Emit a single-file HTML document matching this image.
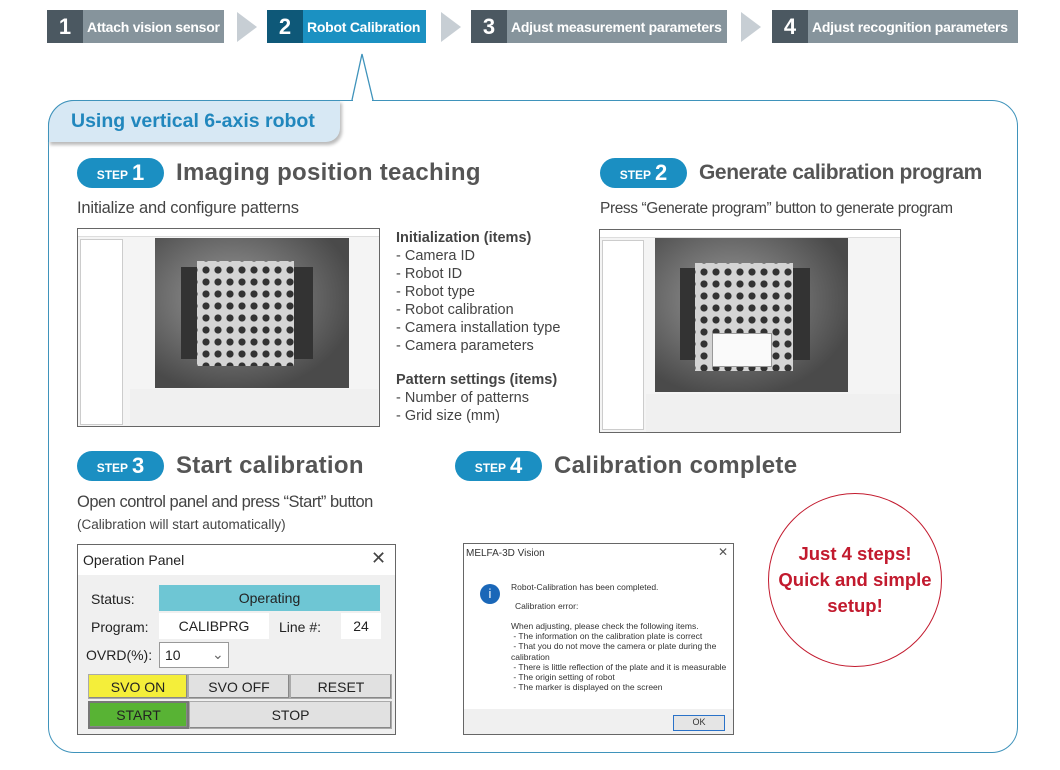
<!DOCTYPE html>
<html><head><meta charset="utf-8"><style>
*{margin:0;padding:0;box-sizing:border-box}
body{width:1060px;height:770px;background:#fff;font-family:"Liberation Sans",Arial,sans-serif;position:relative;overflow:hidden;color:#444}
.a{position:absolute}
.sb{position:absolute;top:10px;height:33px;display:flex;color:#fff;font-weight:bold}
.sb .n{width:36px;display:flex;align-items:center;justify-content:center;font-size:22px}
.sb .t{display:flex;align-items:center;padding-left:4px;font-size:14px;letter-spacing:-0.25px;white-space:nowrap}
.arr{position:absolute;top:12px;width:0;height:0;border-top:15px solid transparent;border-bottom:15px solid transparent;border-left:20px solid #c7ced4}
.pill{position:absolute;height:30px;width:87px;border-radius:15px;background:#1b8fc2;color:#fff;font-weight:bold;display:flex;align-items:center;justify-content:center}
.pill small{font-size:12px;margin-right:4px;margin-top:3px}
.pill b{font-size:22px}
.h{position:absolute;font-size:24px;font-weight:bold;color:#555;letter-spacing:0.3px;white-space:nowrap}
.sub{position:absolute;font-size:16.5px;color:#444;letter-spacing:-0.2px;white-space:nowrap}
.list{position:absolute;font-size:14.5px;line-height:18px;color:#444}
.shot{position:absolute;border:1px solid #666;background:#f4f4f4}
.plate{position:absolute;background-color:#d4d4d4;background-image:radial-gradient(circle,#333 0 40%,transparent 44%);background-size:12px 12px;background-position:3px 3px}
.btn{position:absolute;background:#e1e1e1;border:1px solid #aaa;box-shadow:inset -1px -1px 0 #888;font-size:14px;display:flex;align-items:center;justify-content:center;color:#222}
.op{font-family:"Liberation Sans",sans-serif;color:#222}
.img{position:absolute;background:#5a5a5a;background-image:radial-gradient(ellipse at 40% 40%,#9a9a9a,#4a4a4a 75%)}
</style></head><body>

<div class="sb" style="left:47px;width:177px"><div class="n" style="background:#4b5861">1</div><div class="t" style="background:#86949c;flex:1">Attach vision sensor</div></div>
<div class="arr" style="left:237px"></div>
<div class="sb" style="left:267px;width:159px"><div class="n" style="background:#0e5878">2</div><div class="t" style="background:#1b91c2;flex:1">Robot Calibration</div></div>
<div class="arr" style="left:441px"></div>
<div class="sb" style="left:471px;width:256px"><div class="n" style="background:#4b5861">3</div><div class="t" style="background:#86949c;flex:1">Adjust measurement parameters</div></div>
<div class="arr" style="left:741px"></div>
<div class="sb" style="left:772px;width:246px"><div class="n" style="background:#4b5861">4</div><div class="t" style="background:#86949c;flex:1">Adjust recognition parameters</div></div>

<div class="a" style="left:48px;top:100px;width:970px;height:653px;border:1.3px solid #3f93bb;border-radius:26px"></div>
<svg class="a" style="left:340px;top:52px" width="60" height="52"><path d="M12 48 L22 2 L33 48" fill="#fff" stroke="#3f93bb" stroke-width="1.3"/><rect x="13" y="48" width="19" height="4" fill="#fff"/></svg>
<div class="a" style="left:48px;top:100px;width:292px;height:42px;background:#d7e8f4;border-radius:26px 0 14px 0;box-shadow:2px 3px 3px #bbb;border-top:1.3px solid #3f93bb;border-left:1.3px solid #3f93bb"></div>
<div class="a" style="left:71px;top:110px;font-size:19.5px;font-weight:bold;color:#2187bd">Using vertical 6-axis robot</div>

<div class="pill" style="left:77px;top:158px"><small>STEP</small><b>1</b></div>
<div class="h" style="left:176px;top:159px">Imaging position teaching</div>
<div class="sub" style="left:77px;top:199px">Initialize and configure patterns</div>

<div class="pill" style="left:600px;top:158px"><small>STEP</small><b>2</b></div>
<div class="h" style="left:699px;top:161px;font-size:21px;letter-spacing:-0.4px">Generate calibration program</div>
<div class="sub" style="left:600px;top:200px;font-size:15.5px;letter-spacing:-0.4px">Press “Generate program” button to generate program</div>

<div class="shot" style="left:77px;top:228px;width:303px;height:199px">
 <div class="a" style="left:0;top:0;width:301px;height:8px;background:#fff;border-bottom:1px solid #ddd"></div>
 <div class="a" style="left:2px;top:10px;width:43px;height:186px;background:#fff;border:1px solid #ccc"></div>
 <div class="img" style="left:77px;top:9px;width:194px;height:150px"></div>
 <div class="a" style="left:103px;top:38px;width:132px;height:92px;background:#333"></div>
 <div class="plate" style="left:119px;top:32px;width:97px;height:105px"></div>
 <div class="a" style="left:52px;top:160px;width:248px;height:37px;background:#f0f0f0"></div>
</div>
<div class="list" style="left:396px;top:229px"><b>Initialization (items)</b><br>- Camera ID<br>- Robot ID<br>- Robot type<br>- Robot calibration<br>- Camera installation type<br>- Camera parameters</div>
<div class="list" style="left:396px;top:371px"><b>Pattern settings (items)</b><br>- Number of patterns<br>- Grid size (mm)</div>

<div class="shot" style="left:599px;top:229px;width:302px;height:204px">
 <div class="a" style="left:0;top:0;width:300px;height:8px;background:#fff;border-bottom:1px solid #ddd"></div>
 <div class="a" style="left:2px;top:10px;width:42px;height:190px;background:#fff;border:1px solid #ccc"></div>
 <div class="img" style="left:55px;top:8px;width:193px;height:154px"></div>
 <div class="a" style="left:80px;top:38px;width:130px;height:92px;background:#333"></div>
 <div class="plate" style="left:95px;top:33px;width:98px;height:108px"></div>
 <div class="a" style="left:112px;top:103px;width:60px;height:34px;background:#fafafa;border:1px solid #999"></div>
 <div class="a" style="left:46px;top:164px;width:254px;height:38px;background:#f0f0f0"></div>
</div>

<div class="pill" style="left:77px;top:451px"><small>STEP</small><b>3</b></div>
<div class="h" style="left:176px;top:452px">Start calibration</div>
<div class="sub" style="left:77px;top:493px;letter-spacing:-0.5px">Open control panel and press “Start” button</div>
<div class="a" style="left:77px;top:517px;font-size:13.5px;color:#444">(Calibration will start automatically)</div>

<div class="pill" style="left:455px;top:451px"><small>STEP</small><b>4</b></div>
<div class="h" style="left:554px;top:452px">Calibration complete</div>

<div class="a op" style="left:77px;top:544px;width:319px;height:191px;border:1px solid #666;background:#f0f0f0">
 <div class="a" style="left:0;top:0;width:317px;height:30px;background:#fff"></div>
 <div class="a" style="left:5px;top:7px;font-size:14px">Operation Panel</div>
 <div class="a" style="left:293px;top:3px;font-size:18px;color:#444">✕</div>
 <div class="a" style="left:13px;top:46px;font-size:14px">Status:</div>
 <div class="a" style="left:81px;top:40px;width:221px;height:26px;background:#6ec6d4;font-size:14px;display:flex;align-items:center;justify-content:center">Operating</div>
 <div class="a" style="left:13px;top:74px;font-size:14px">Program:</div>
 <div class="a" style="left:81px;top:68px;width:110px;height:26px;background:#fff;font-size:14px;display:flex;align-items:center;justify-content:center">CALIBPRG</div>
 <div class="a" style="left:201px;top:74px;font-size:14px">Line #:</div>
 <div class="a" style="left:263px;top:68px;width:40px;height:26px;background:#fff;font-size:14px;display:flex;align-items:center;justify-content:center">24</div>
 <div class="a" style="left:8px;top:102px;font-size:14px">OVRD(%):</div>
 <div class="a" style="left:81px;top:97px;width:70px;height:26px;background:#fff;border:1px solid #999;font-size:14px;padding:4px 0 0 5px">10<span style="position:absolute;left:52px;top:3px;color:#666">⌄</span></div>
 <div class="btn" style="left:10px;top:129px;width:100px;height:25px;background:#f4ee3a">SVO ON</div>
 <div class="btn" style="left:110px;top:129px;width:102px;height:25px">SVO OFF</div>
 <div class="btn" style="left:212px;top:129px;width:102px;height:25px">RESET</div>
 <div class="btn" style="left:10px;top:156px;width:101px;height:28px;background:#58b334;border:2px solid #777">START</div>
 <div class="btn" style="left:111px;top:156px;width:203px;height:28px">STOP</div>
</div>

<div class="a" style="left:463px;top:543px;width:271px;height:192px;border:1px solid #666;background:#fff;font-size:8.5px;color:#333">
 <div class="a" style="left:2px;top:4px;font-size:10px">MELFA-3D Vision</div>
 <div class="a" style="left:254px;top:1px;font-size:12px;color:#555">✕</div>
 <div class="a" style="left:16px;top:40px;width:20px;height:20px;border-radius:50%;background:#1a67b8;color:#fff;font-size:13px;text-align:center;line-height:20px">i</div>
 <div class="a" style="left:47px;top:38px">Robot-Calibration has been completed.</div>
 <div class="a" style="left:51px;top:57px">Calibration error:</div>
 <div class="a" style="left:47px;top:77px;line-height:10.2px">When adjusting, please check the following items.<br>&nbsp;- The information on the calibration plate is correct<br>&nbsp;- That you do not move the camera or plate during the<br>calibration<br>&nbsp;- There is little reflection of the plate and it is measurable<br>&nbsp;- The origin setting of robot<br>&nbsp;- The marker is displayed on the screen</div>
 <div class="a" style="left:0;top:165px;width:269px;height:25px;background:#f0f0f0"></div>
 <div class="a" style="left:209px;top:171px;width:52px;height:16px;border:1.5px solid #2a72c8;background:#e5e5e5;text-align:center;line-height:13px;font-size:9px">OK</div>
</div>

<div class="a" style="left:768px;top:493px;width:174px;height:174px;border:1.5px solid #c21a2e;border-radius:50%;display:flex;align-items:center;justify-content:center;text-align:center;color:#c21a2e;font-weight:bold;font-size:18.5px;line-height:26px">Just 4 steps!<br>Quick and simple<br>setup!</div>
</body></html>
